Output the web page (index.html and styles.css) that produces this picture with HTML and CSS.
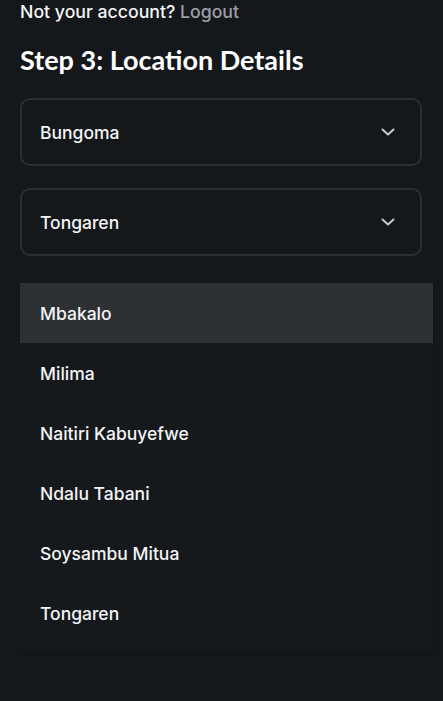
FILE: index.html
```html
<!DOCTYPE html>
<html lang="en">
<head>
<meta charset="utf-8">
<title>Step 3: Location Details</title>
<link rel="stylesheet" href="styles.css">
</head>
<body>
<main class="page">
  <p class="account">Not your account? <a class="logout" href="#">Logout</a></p>
  <h1 class="title">Step 3: Location Details</h1>
  <div class="select">
    <span class="select-value">Bungoma</span>
    <svg class="chevron" viewBox="0 0 14 8" width="14" height="8"><path d="M1.5 1.5 L7 6.5 L12.5 1.5" fill="none" stroke="currentColor" stroke-width="2" stroke-linecap="round" stroke-linejoin="round"/></svg>
  </div>
  <div class="select">
    <span class="select-value">Tongaren</span>
    <svg class="chevron" viewBox="0 0 14 8" width="14" height="8"><path d="M1.5 1.5 L7 6.5 L12.5 1.5" fill="none" stroke="currentColor" stroke-width="2" stroke-linecap="round" stroke-linejoin="round"/></svg>
  </div>
  <ul class="menu">
    <li class="option active">Mbakalo</li>
    <li class="option">Milima</li>
    <li class="option">Naitiri Kabuyefwe</li>
    <li class="option">Ndalu Tabani</li>
    <li class="option">Soysambu Mitua</li>
    <li class="option">Tongaren</li>
  </ul>
</main>
</body>
</html>
```

FILE: styles.css
```css
html, body {
  margin: 0;
  padding: 0;
  background: #15181b;
  height: 100%;
}
body {
  font-family: "Inter", "Noto Sans", sans-serif;
  color: #f2f3f4;
}
.page {
  padding: 0 21px 0 20px;
}
.account {
  margin: 1px 0 0;
  font-size: 17.7px;
  line-height: 22px;
  font-weight: 500;
  color: #f4f5f6;
}
.logout {
  color: #9ba0a6;
  text-decoration: none;
}
.title {
  margin: 21px 0 22px;
  font-family: "Lato", "Noto Sans", sans-serif;
  font-size: 27px;
  line-height: 32px;
  font-weight: 700;
  color: #ffffff;
}
.select {
  height: 64px;
  border: 2px solid #2b2e32;
  border-radius: 10px;
  display: flex;
  align-items: center;
  justify-content: space-between;
  padding: 0 25px 0 18px;
  margin-bottom: 22px;
}
.select + .select {
  margin-bottom: 27px;
}
.select-value {
  font-size: 17.5px;
  font-weight: 500;
  color: #f3f4f5;
}
.chevron {
  color: #c9cbce;
  display: block;
}
.menu {
  list-style: none;
  margin: 0 -11px 0 0;
  padding: 0 0 10px;
  background: #16191c;
  box-shadow: 0 1px 2px rgba(0, 0, 0, 0.35);
}
.option {
  height: 60px;
  display: flex;
  align-items: center;
  padding: 0 20px;
  font-size: 17.5px;
  font-weight: 500;
  color: #f3f4f5;
}
.option.active {
  background: #2e3134;
}
```
